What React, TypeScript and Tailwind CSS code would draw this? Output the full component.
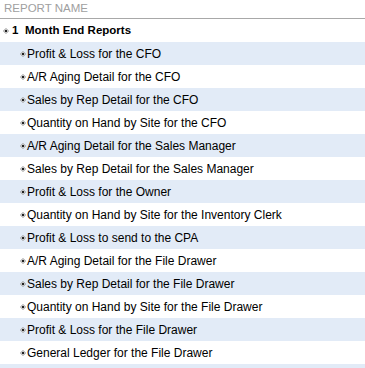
const REPORTS = [
  "Profit & Loss for the CFO",
  "A/R Aging Detail for the CFO",
  "Sales by Rep Detail for the CFO",
  "Quantity on Hand by Site for the CFO",
  "A/R Aging Detail for the Sales Manager",
  "Sales by Rep Detail for the Sales Manager",
  "Profit & Loss for the Owner",
  "Quantity on Hand by Site for the Inventory Clerk",
  "Profit & Loss to send to the CPA",
  "A/R Aging Detail for the File Drawer",
  "Sales by Rep Detail for the File Drawer",
  "Quantity on Hand by Site for the File Drawer",
  "Profit & Loss for the File Drawer",
  "General Ledger for the File Drawer",
];

function Diamond() {
  return (
    <svg width="6" height="6" viewBox="0 0 6 6" className="shrink-0">
      <path d="M3 0.5 L5.5 3 L3 5.5 L0.5 3 Z" fill="#fff" stroke="#8a8a8a" strokeWidth="1" />
      <rect x="2" y="2" width="2" height="2" fill="#222" />
    </svg>
  );
}

export default function App() {
  return (
    <div className="h-[368px] w-[365px] overflow-hidden bg-white font-['Liberation_Sans',Arial,sans-serif] text-[12px] text-black">
      <div className="flex h-[19px] items-center border-b border-[#a8a8a8] pl-[4px] text-[11.5px] text-[#a0a0a0]">
        REPORT NAME
      </div>
      <div className="flex h-[23px] items-center gap-[3px] pl-[3px] text-[11.5px] font-bold">
        <Diamond />
        <span className="w-[8px]">1</span>
        <span className="pl-[2px]">Month End Reports</span>
      </div>
      {REPORTS.map((r, i) => (
        <div
          key={r}
          className={`flex h-[23px] items-center gap-[1px] pl-[20px] ${i % 2 === 0 ? "bg-[#e2ebf7]" : "bg-white"}`}
        >
          <Diamond />
          <span>{r}</span>
        </div>
      ))}
      <div className="h-[23px] bg-[#e2ebf7]" />
    </div>
  );
}
